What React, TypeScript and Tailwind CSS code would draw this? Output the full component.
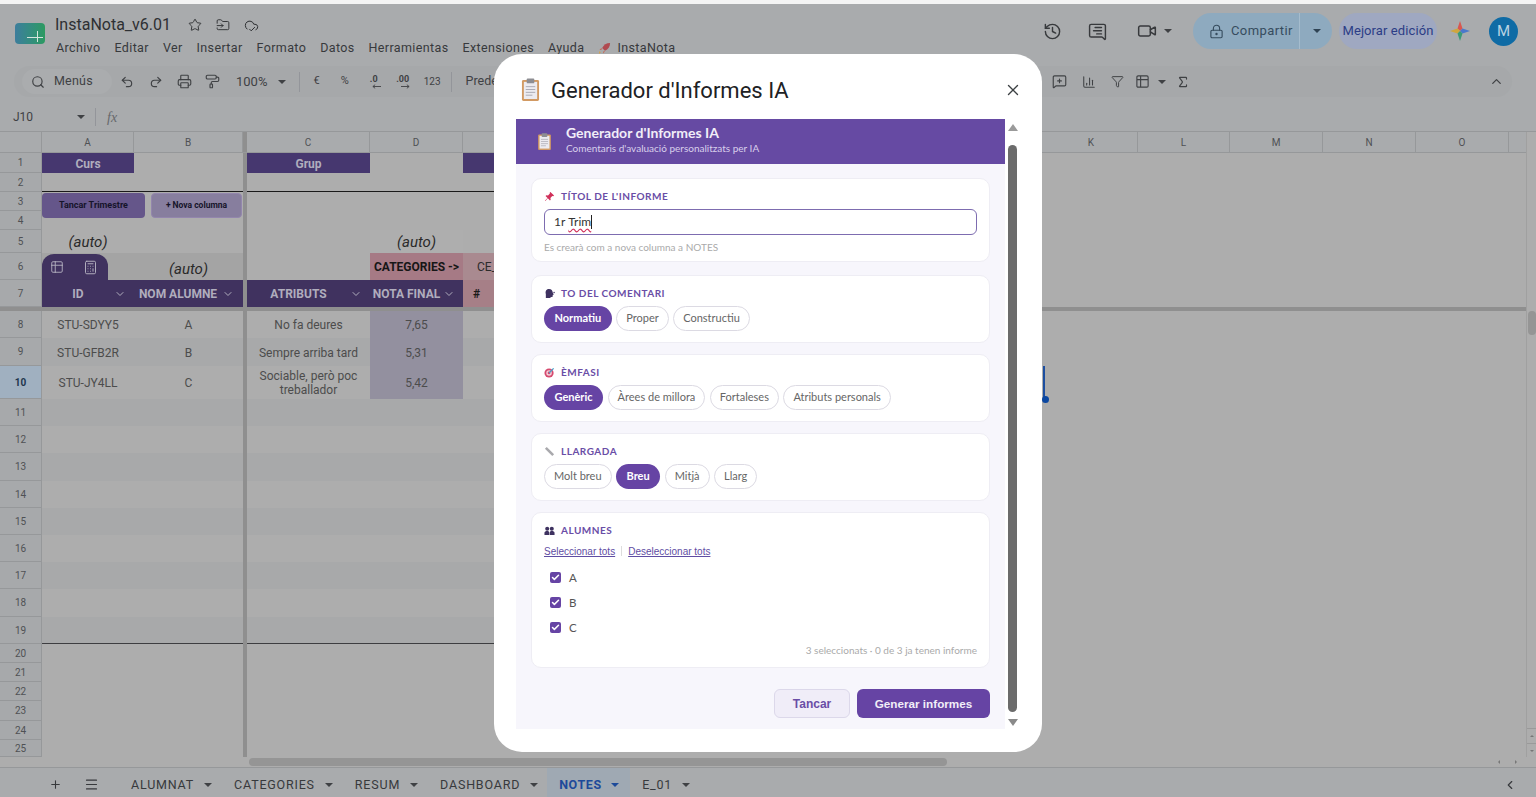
import React from 'react';
import {
  Search, Undo2, Redo2, Printer, PaintRoller, Star, FolderInput, CloudCheck, History, MessageSquareText,
  Video, LockKeyhole, MessageSquarePlus, ChartColumn, Filter, Sigma, ChevronUp, ChevronLeft, ChevronDown,
  X, Table2, Calculator, Plus, Menu, Check,
} from 'lucide-react';

const Caret = ({ className = 'text-[#3f4144]' }: { className?: string }) => (
  <svg viewBox="0 0 8 4" className={`h-[4px] w-[8px] fill-current ${className}`}>
    <path d="M0 0h8L4 4z" />
  </svg>
);

const Clipboard = ({ className }: { className: string }) => (
  <svg viewBox="0 0 20 24" className={className}>
    <rect x="1" y="2" width="18" height="22" rx="1.5" fill="#d29a63" />
    <rect x="3" y="4" width="14" height="18" fill="#ecebf0" />
    <rect x="6" y="0.5" width="8" height="5" rx="1" fill="#8d8d92" />
    <path d="M5 9h10M5 12h10M5 15h10M5 18h7" stroke="#a9a9b2" strokeWidth="1" />
  </svg>
);

const PinIcon = () => (
  <svg viewBox="0 0 12 12" className="h-[11px] w-[11px]">
    <path d="M7 1l4 4-1 .6-1-.2L7 7.600 7.300 9.500 6.500 10.300 4.200 8 1.500 10.800 1 10.500 3.800 7.600 1.700 5.500 2.500 4.700 4.400 5 6.400 2.800 6.300 1.700z" fill="#d0305a" />
  </svg>
);

const SpeakIcon = () => (
  <svg viewBox="0 0 12 12" className="h-[11px] w-[11px]">
    <path d="M2 11V6.500C1 3 3 1 5.500 1 8 1 9.500 2.500 9.500 5l1.200 2.200-1.200.4V9.500L7 10v1z" fill="#3e3260" />
    <circle cx="11" cy="5" r=".8" fill="#3e3260" />
  </svg>
);

const TargetIcon = () => (
  <svg viewBox="0 0 12 12" className="h-[11px] w-[11px]">
    <circle cx="5.500" cy="6.500" r="5" fill="#d64a6f" />
    <circle cx="5.500" cy="6.500" r="3" fill="#f3d5dd" />
    <circle cx="5.500" cy="6.500" r="1.500" fill="#d64a6f" />
    <path d="M5.500 6.500L10.500 1.500" stroke="#4a9cc7" strokeWidth="1.400" />
  </svg>
);

const RulerIcon = () => (
  <svg viewBox="0 0 12 12" className="h-[11px] w-[11px]">
    <path d="M1 3l2-2 8 8-2 2z" fill="#a9a9ad" />
  </svg>
);

const PeopleIcon = () => (
  <svg viewBox="0 0 12 12" className="h-[11px] w-[11px] fill-[#3e3260]">
    <circle cx="3.500" cy="4" r="2.200" />
    <circle cx="8.500" cy="4" r="2.200" />
    <path d="M.5 11V8.500C.5 7 2 6.500 3.500 6.500S5.700 7 5.700 8.500V11zM6.300 11V8.500C6.300 7 7 6.500 8.500 6.500S11.500 7 11.500 8.500V11z" />
  </svg>
);

const Gem = () => (
  <svg viewBox="0 0 20 20" className="h-[20px] w-[20px]">
    <path d="M10 0l2.500 7.500L10 10 7.500 7.500z" fill="#d9574f" />
    <path d="M0 10l7.500-2.500L10 10l-2.500 2.500z" fill="#cfa63e" />
    <path d="M20 10l-7.500-2.500L10 10l2.500 2.500z" fill="#4a78cc" />
    <path d="M10 20l2.500-7.500L10 10l-2.500 2.500z" fill="#3b9a78" />
  </svg>
);

const menus = ['Archivo', 'Editar', 'Ver', 'Insertar', 'Formato', 'Datos', 'Herramientas', 'Extensiones', 'Ayuda'];

const TopBar = () => (
  <div className="flex h-[58px] items-start bg-[#a9abad] pl-[15px]">
    <div className="mt-[19px] flex h-[21px] w-[30px] items-end justify-end rounded-[4px] bg-gradient-to-r from-[#3d7d9c] to-[#2c9a60] pb-[6px] pr-[2px]">
      <div className="relative h-px w-[16px] bg-[#d5e4dc]">
        <div className="absolute bottom-[-4px] left-[10px] h-[11px] w-px bg-[#d5e4dc]" />
      </div>
    </div>
    <div className="ml-[10px] flex flex-col pt-[10px]">
      <div className="flex h-[22px] items-center text-[#2e3033]">
        <span className="text-[16px]">InstaNota_v6.01</span>
        <Star className="ml-[17px] h-[14px] w-[14px]" strokeWidth={1.6} />
        <FolderInput className="ml-[14px] h-[14px] w-[14px]" strokeWidth={1.6} />
        <CloudCheck className="ml-[14px] h-[15px] w-[15px]" strokeWidth={1.6} />
      </div>
      <div className="mt-[3px] flex h-[18px] items-center gap-[14px] pl-[1px] text-[12.500px] tracking-[0.37px] text-[#37393c]">
        {menus.map((m) => (
          <span key={m}>{m}</span>
        ))}
        <span className="flex items-center gap-[6px]">
          <svg viewBox="0 0 14 14" className="h-[13px] w-[13px]">
            <path d="M13 1C9 1 6 3 4.500 6.500l3 3C11 8 13 5 13 1z" fill="#b04a50" />
            <path d="M4.500 6.500L1.500 8l2 .5zM7.500 9.500L6 12.500 5.500 10.500z" fill="#c9604a" />
            <path d="M3 11L1 13l.5-3z" fill="#d8a040" />
          </svg>
          InstaNota
        </span>
      </div>
    </div>
    <div className="ml-auto flex items-center pt-[9px] pr-[18px] text-[#37393c]">
      <History className="h-[19px] w-[19px]" strokeWidth={1.8} />
      <MessageSquareText className="ml-[26px] h-[19px] w-[19px] -scale-x-100" strokeWidth={1.8} />
      <Video className="ml-[30px] h-[20px] w-[20px]" strokeWidth={1.8} />
      <div className="ml-[7px]"><Caret /></div>
      <div className="ml-[21px] flex h-[36px] w-[139px] items-center rounded-full bg-[#8eaabf] text-[#364c5e]">
        <div className="flex h-full w-[107px] items-center border-r border-[#a5bccd] pl-[16px]">
          <LockKeyhole className="h-[15px] w-[15px]" strokeWidth={1.8} />
          <span className="ml-[7px] text-[13px] tracking-[0.4px]">Compartir</span>
        </div>
        <div className="pl-[13px]"><Caret className="text-[#2f4354]" /></div>
      </div>
      <div className="ml-[7px] flex h-[36px] w-[98px] items-center justify-center rounded-full bg-[#9fa8c1] text-[13px] tracking-[0.1px] text-[#2c3d86]">
        Mejorar edición
      </div>
      <div className="ml-[13px]"><Gem /></div>
      <div className="ml-[19px] flex h-[29px] w-[29px] items-center justify-center rounded-full bg-[#0f6ba5] text-[15px] text-[#b9d3e3]">
        M
      </div>
    </div>
  </div>
);

const DecIcon = ({ label, right }: { label: string; right?: boolean }) => (
  <div className="flex h-[20px] w-[20px] flex-col items-center justify-center font-bold leading-[9px] text-[#3f4144]">
    <span className="text-[9px]">{label}</span>
    <svg viewBox="0 0 10 5" className="ml-[6px] h-[5px] w-[9px] stroke-current" fill="none" strokeWidth="1">
      {right ? <path d="M0 2.500h9M6.500.5l2.500 2-2.500 2" /> : <path d="M10 2.500H1M3.500.5L1 2.500l2.500 2" />}
    </svg>
  </div>
);

const Toolbar = () => (
  <div className="flex h-[41px] items-center bg-[#a9abad] px-[14px] pb-[2px]">
    <div className="flex h-[31px] w-[1498px] items-center rounded-full bg-[#a6a8aa] pl-[8px] text-[#3f4144]">
      <div className="flex h-[25px] w-[90px] items-center rounded-full bg-[#aaacae] pl-[9px] text-[12.500px] tracking-[0.2px]">
        <Search className="h-[14px] w-[14px]" strokeWidth={2} />
        <span className="ml-[9px]">Menús</span>
      </div>
      <Undo2 className="ml-[8px] h-[14px] w-[14px]" strokeWidth={2} />
      <Redo2 className="ml-[15px] h-[14px] w-[14px]" strokeWidth={2} />
      <Printer className="ml-[14px] h-[15px] w-[15px]" strokeWidth={1.8} />
      <PaintRoller className="ml-[13px] h-[15px] w-[15px]" strokeWidth={1.8} />
      <span className="ml-[16px] text-[13px]">100%</span>
      <div className="ml-[11px]"><Caret /></div>
      <div className="ml-[13px] h-[20px] w-px bg-[#93959a]" />
      <span className="ml-[13px] text-[11px]">€</span>
      <span className="ml-[21px] text-[11px]">%</span>
      <div className="ml-[15px]"><DecIcon label=".0" /></div>
      <div className="ml-[9px]"><DecIcon label=".00" right /></div>
      <span className="ml-[11px] text-[10px]">123</span>
      <div className="ml-[10px] h-[20px] w-px bg-[#93959a]" />
      <span className="ml-[14px] text-[12.500px]">Predeterm...</span>
      <div className="ml-auto flex items-center pr-[8px]">
        <MessageSquarePlus className="h-[15px] w-[15px]" strokeWidth={1.8} />
        <ChartColumn className="ml-[15px] h-[14px] w-[14px]" strokeWidth={1.8} />
        <Filter className="ml-[15px] h-[13px] w-[13px]" strokeWidth={1.8} />
        <Table2 className="ml-[11px] h-[15px] w-[15px]" strokeWidth={1.8} />
        <div className="ml-[8px]"><Caret /></div>
        <Sigma className="ml-[10px] h-[14px] w-[14px]" strokeWidth={2} />
        <ChevronUp className="ml-[299px] h-[15px] w-[15px]" strokeWidth={2} />
      </div>
    </div>
  </div>
);

const FormulaBar = () => (
  <div className="flex h-[29px] items-center border-b border-[#96989a] bg-[#a9abad] text-[#3f4144]">
    <span className="ml-[13px] w-[64px] text-[12px]">J10</span>
    <Caret />
    <div className="ml-[10px] h-[18px] w-px bg-[#93959a]" />
    <span className="ml-[11px] font-['Liberation_Serif',serif] text-[14px] italic text-[#66686b]">fx</span>
  </div>
);

const ColHeader = ({ w, label, line = true }: { w: string; label: string; line?: boolean }) => (
  <div className={`${w} flex h-full shrink-0 items-center justify-center text-[10px] text-[#4f5154] ${line ? 'border-r border-[#96989a]' : ''}`}>
    {label}
  </div>
);

type RowProps = {
  n: number;
  h: string;
  band?: string;
  active?: boolean;
  a?: React.ReactNode;
  b?: React.ReactNode;
  c?: React.ReactNode;
  d?: React.ReactNode;
  e?: React.ReactNode;
  aCls?: string;
  bCls?: string;
  cCls?: string;
  dCls?: string;
  eCls?: string;
  under?: string;
  children?: React.ReactNode;
};

const SheetRow = ({ n, h, band = '', active, a, b, c, d, e, aCls = '', bCls = '', cCls = '', dCls = '', eCls = '', under = '', children }: RowProps) => (
  <div className={`relative flex ${h} shrink-0`}>
    <div className={`flex w-[42px] shrink-0 items-center justify-center border-b border-r border-[#96989a] text-[10px] ${active ? 'bg-[#a0b0c0] font-bold text-[#22364e]' : 'bg-[#a7a9ab] text-[#4f5154]'}`}>
      {n}
    </div>
    <div className={`flex w-[92px] shrink-0 items-center justify-center pt-[1px] ${band} ${under} ${aCls}`}>{a}</div>
    <div className={`flex w-[109px] shrink-0 items-center justify-center pt-[1px] ${band} ${under} ${bCls}`}>{b}</div>
    <div className="w-[4px] shrink-0 bg-[#8f8f8f]" />
    <div className={`flex w-[123px] shrink-0 items-center justify-center pt-[1px] text-center ${band} ${under} ${cCls}`}>{c}</div>
    <div className={`flex w-[93px] shrink-0 items-center justify-center pt-[1px] ${band} ${under} ${dCls}`}>{d}</div>
    <div className={`flex w-[579px] shrink-0 items-center pt-[1px] ${band} ${under} ${eCls}`}>{e}</div>
    {children}
  </div>
);

const bandA = 'bg-[#a8a9aa]';
const bandB = 'bg-[#adadad]';
const cellText = 'text-[12px] text-[#4c4c4c]';
const headText = 'text-[12px] font-bold text-[#b0adbd]';
const Auto = () => <span className="text-[15px] italic text-[#2a2a2a]">(auto)</span>;

const HeadCell = ({ label }: { label: string }) => (
  <div className={`flex w-full items-center ${headText}`}>
    <span className="flex-1 text-center">{label}</span>
    <ChevronDown className="h-[12px] w-[12px] shrink-0 text-[#b0adbd]" strokeWidth={2} />
  </div>
);

const emptyRows = [
  { n: 11, h: 'h-[27px]', band: bandA },
  { n: 12, h: 'h-[27px]', band: bandB },
  { n: 13, h: 'h-[28px]', band: bandA },
  { n: 14, h: 'h-[27px]', band: bandB },
  { n: 15, h: 'h-[27px]', band: bandA },
  { n: 16, h: 'h-[27px]', band: bandB },
  { n: 17, h: 'h-[27px]', band: bandA },
  { n: 18, h: 'h-[28px]', band: bandB },
];

const Grid = () => (
  <div className="flex min-h-0 flex-1 flex-col bg-[#adadad] font-['Roboto',sans-serif]">
    <div className="flex min-h-0 flex-1">
      <div className="flex min-w-0 flex-1 flex-col">
        <div className="flex h-[21px] shrink-0 border-b border-[#96989a] bg-[#a9abad]">
          <ColHeader w="w-[42px]" label="" />
          <ColHeader w="w-[92px]" label="A" />
          <ColHeader w="w-[109px]" label="B" />
          <div className="w-[4px] shrink-0 bg-[#8f8f8f]" />
          <ColHeader w="w-[123px]" label="C" />
          <ColHeader w="w-[93px]" label="D" />
          <div className="w-[582px] shrink-0" />
          <ColHeader w="w-[93px]" label="K" />
          <ColHeader w="w-[92px]" label="L" />
          <ColHeader w="w-[93px]" label="M" />
          <ColHeader w="w-[93px]" label="N" />
          <ColHeader w="w-[93px]" label="O" />
          <div className="flex-1" />
        </div>
        <SheetRow n={1} h="h-[20px]"
          a={<span className={headText}>Curs</span>} aCls="bg-[#46376f]"
          c={<span className={headText}>Grup</span>} cCls="bg-[#46376f]"
          eCls="bg-[#46376f]" />
        <SheetRow n={2} h="h-[19px]" under="border-b border-[#1a1a1a]" />
        <SheetRow n={3} h="h-[19px]">
          <div className="absolute left-[42px] top-[1px] flex h-[25px] w-[103px] items-center justify-center rounded-[4px] bg-[#65568a] text-[9px] font-bold text-[#16142a]">
            Tancar Trimestre
          </div>
          <div className="absolute left-[151px] top-[1px] flex h-[25px] w-[91px] items-center justify-center gap-[2px] rounded-[4px] border border-[#9386ad] bg-[#877e9e] text-[8.500px] font-bold text-[#16142a]">
            <span>+</span>
            <span>Nova columna</span>
          </div>
        </SheetRow>
        <SheetRow n={4} h="h-[19px]" />
        <SheetRow n={5} h="h-[23px]" a={<Auto />} d={<Auto />} dCls="bg-[#aeaeae]" />
        <SheetRow n={6} h="h-[27px]"
          aCls="items-end !justify-start bg-[#a4a4a4]" bCls="items-end bg-[#a4a4a4]"
          a={
            <div className="flex h-[26px] w-[66px] items-center rounded-t-[12px] bg-[#40325f] pl-[8px] text-[#b0adbd]">
              <Table2 className="h-[14px] w-[14px]" strokeWidth={1.6} />
              <Calculator className="ml-[19px] h-[15px] w-[15px]" strokeWidth={1.6} />
            </div>
          }
          b={<Auto />}
          d={<span className="text-[12px] font-bold text-[#161616]">CATEGORIES -&gt;</span>} dCls="bg-[#a67a85]"
          e={<span className="ml-[14px] text-[12px] text-[#2c2c2c]">CE_</span>} eCls="bg-[#a98a90]" />
        <SheetRow n={7} h="h-[27px]"
          aCls="bg-[#40325f] pr-[8px]" bCls="bg-[#40325f] pr-[9px]" cCls="bg-[#40325f] pr-[8px]" dCls="bg-[#40325f] pr-[8px]"
          a={<HeadCell label="ID" />}
          b={<HeadCell label="NOM ALUMNE" />}
          c={<HeadCell label="ATRIBUTS" />}
          d={<HeadCell label="NOTA FINAL" />}
          e={<span className="ml-[10px] text-[12px] font-bold text-[#1a1a1a]">#</span>} eCls="bg-[#a67f87]" />
        <div className="h-[4px] shrink-0 bg-[#8f8f8f]" />
        <SheetRow n={8} h="h-[27px]" band={bandB}
          a={<span className={cellText}>STU-SDYY5</span>} b={<span className={cellText}>A</span>}
          c={<span className={cellText}>No fa deures</span>} d={<span className={cellText}>7,65</span>} dCls="!bg-[#93909f]" />
        <SheetRow n={9} h="h-[28px]" band={bandA}
          a={<span className={cellText}>STU-GFB2R</span>} b={<span className={cellText}>B</span>}
          c={<span className={cellText}>Sempre arriba tard</span>} d={<span className={cellText}>5,31</span>} dCls="!bg-[#93909f]" />
        <SheetRow n={10} h="h-[33px]" active band={bandB}
          a={<span className={cellText}>STU-JY4LL</span>} b={<span className={cellText}>C</span>}
          c={<span className={`${cellText} leading-[14px]`}>Sociable, però poc treballador</span>} d={<span className={cellText}>5,42</span>} dCls="!bg-[#93909f]">
          <div className="absolute left-[1043px] top-0 h-[33px] w-[2px] bg-[#1c4ea0]" />
          <div className="absolute left-[1042px] top-[30px] h-[7px] w-[7px] rounded-full bg-[#0b47a1]" />
        </SheetRow>
        {emptyRows.map((r) => (
          <SheetRow key={r.n} n={r.n} h={r.h} band={r.band} />
        ))}
        <SheetRow n={19} h="h-[27px]" band={bandA} under="border-b border-[#3d3d40]" />
        <SheetRow n={20} h="h-[19px]" />
        <SheetRow n={21} h="h-[19px]" />
        <SheetRow n={22} h="h-[19px]" />
        <SheetRow n={23} h="h-[20px]" />
        <SheetRow n={24} h="h-[19px]" />
        <SheetRow n={25} h="h-[17px]" />
      </div>
      <div className="relative flex w-[10px] shrink-0 flex-col border-l border-[#a0a0a0]">
        <div className="mx-auto mt-[179px] h-[24px] w-[8px] rounded-full bg-[#959595]" />
        <div className="mt-auto flex h-[15px] items-center justify-center border-t border-[#9a9a9a]">
          <Caret className="rotate-180 scale-50 text-[#777]" />
        </div>
        <div className="flex h-[14px] items-center justify-center border-t border-[#9a9a9a]">
          <Caret className="scale-50 text-[#777]" />
        </div>
      </div>
    </div>
    <div className="flex h-[10px] shrink-0 items-center">
      <div className="w-[249px]" />
      <div className="h-[8px] w-[698px] rounded-full bg-[#959595]" />
      <div className="ml-auto mr-[16px] flex items-center gap-[9px] text-[#777]">
        <Caret className="rotate-90 scale-50" />
        <Caret className="-rotate-90 scale-50" />
      </div>
    </div>
  </div>
);

const tabs = ['ALUMNAT', 'CATEGORIES', 'RESUM', 'DASHBOARD'];

const TabBar = () => (
  <div className="flex h-[30px] shrink-0 items-center border-t border-[#96989a] bg-[#a9abad] font-['Roboto',sans-serif] text-[12.500px] tracking-[0.8px] text-[#37393c]">
    <Plus className="ml-[49px] mt-[4px] h-[13px] w-[13px]" strokeWidth={2} />
    <Menu className="ml-[22px] mt-[4px] h-[15px] w-[15px]" strokeWidth={1.8} />
    <div className="ml-[32px] flex h-full items-center">
      {tabs.map((t) => (
        <div key={t} className="mr-[22px] flex h-full items-center pt-[5px]">
          <span>{t}</span>
          <div className="ml-[10px]"><Caret /></div>
        </div>
      ))}
      <div className="-ml-[13px] flex h-full w-[83px] items-center bg-[#9fa9b3] pl-[12px] pt-[5px] font-bold tracking-[0.6px] text-[#1d4a9a]">
        <span>NOTES</span>
        <div className="ml-[9px]"><Caret className="text-[#1d4a9a]" /></div>
      </div>
      <div className="ml-[12px] flex h-full items-center pt-[5px]">
        <span>E_01</span>
        <div className="ml-[10px]"><Caret /></div>
      </div>
    </div>
    <ChevronLeft className="ml-auto mr-[19px] mt-[4px] h-[14px] w-[14px]" strokeWidth={2} />
  </div>
);

const Card = ({ icon, title, className = '', children }: { icon: React.ReactNode; title: string; className?: string; children: React.ReactNode }) => (
  <div className={`rounded-[10px] border border-[#eeedf4] bg-white px-[12px] ${className}`}>
    <div className="flex h-[13px] items-center">
      <span className="flex w-[17px] shrink-0">{icon}</span>
      <span className="text-[10px] font-bold tracking-[0.5px] text-[#6a4da6]">{title}</span>
    </div>
    {children}
  </div>
);

const Pills = ({ items, active }: { items: string[]; active: string }) => (
  <div className="mt-[6px] flex gap-[4.500px]">
    {items.map((p) =>
      p === active ? (
        <span key={p} className="flex h-[25px] items-center rounded-full bg-[#6644a4] px-[10.500px] text-[11px] font-bold text-white">{p}</span>
      ) : (
        <span key={p} className="flex h-[25px] items-center rounded-full border border-[#dcdae3] bg-white px-[9px] text-[11px] text-[#666]">{p}</span>
      ),
    )}
  </div>
);

const Student = ({ name }: { name: string }) => (
  <div className="flex h-[25px] items-center pl-[6px] text-[11.500px] text-[#555]">
    <span className="flex h-[11px] w-[11px] items-center justify-center rounded-[2px] bg-[#6644a4]">
      <Check className="h-[9px] w-[9px] text-white" strokeWidth={4} />
    </span>
    <span className="ml-[8px]">{name}</span>
  </div>
);

const Modal = () => (
  <div className="absolute left-[494px] top-[54px] flex h-[698px] w-[548px] flex-col rounded-[28px] bg-white pl-[22px]">
    <div className="flex h-[65px] shrink-0 items-center pt-[6px]">
      <Clipboard className="ml-[5px] h-[23px] w-[19px]" />
      <span className="ml-[11px] mt-[1px] font-['Roboto',sans-serif] text-[22px] text-[#202124]">Generador d'Informes IA</span>
      <X className="ml-auto mr-[20px] h-[18px] w-[18px] text-[#3c4043]" strokeWidth={1.8} />
    </div>
    <div className="flex h-[610px] w-[504px] font-['Lato',sans-serif]">
      <div className="flex w-[489px] shrink-0 flex-col bg-[#f7f6fc]">
        <div className="flex h-[45px] shrink-0 items-center bg-[#664aa3] pl-[21px] text-white">
          <Clipboard className="h-[17px] w-[15px]" />
          <div className="mb-[5px] ml-[14px] flex flex-col">
            <span className="text-[14px] font-bold leading-[17px] text-[#f1eef8]">Generador d'Informes IA</span>
            <span className="text-[10px] leading-[14px] text-[#d9d0ec]">Comentaris d'avaluació personalitzats per IA</span>
          </div>
        </div>
        <div className="flex flex-col px-[15px] pt-[14px]">
          <Card icon={<PinIcon />} title="TÍTOL DE L'INFORME" className="h-[84px] pt-[11px]">
            <div className="mt-[6px] flex h-[26px] items-center rounded-[6px] border border-[#7d6cb0] pl-[9px] text-[12px] text-[#333]">
              1r <span className="ml-[3px] underline decoration-[#d0305a] decoration-wavy underline-offset-2">Trim</span>
              <span className="h-[14px] w-px bg-[#222]" />
            </div>
            <div className="mt-[5px] text-[10px] text-[#aaa]">Es crearà com a nova columna a NOTES</div>
          </Card>
          <Card icon={<SpeakIcon />} title="TO DEL COMENTARI" className="mt-[13px] h-[68px] pt-[11px]">
            <Pills items={['Normatiu', 'Proper', 'Constructiu']} active="Normatiu" />
          </Card>
          <Card icon={<TargetIcon />} title="ÈMFASI" className="mt-[11px] h-[68px] pt-[11px]">
            <Pills items={['Genèric', 'Àrees de millora', 'Fortaleses', 'Atributs personals']} active="Genèric" />
          </Card>
          <Card icon={<RulerIcon />} title="LLARGADA" className="mt-[11px] h-[68px] pt-[11px]">
            <Pills items={['Molt breu', 'Breu', 'Mitjà', 'Llarg']} active="Breu" />
          </Card>
          <Card icon={<PeopleIcon />} title="ALUMNES" className="mt-[11px] h-[156px] pt-[11px]">
            <div className="mt-[8px] flex h-[12px] items-center font-['Liberation_Sans',sans-serif] text-[10px] text-[#5f4da3]">
              <span className="underline">Seleccionar tots</span>
              <span className="mx-[6px] h-[10px] w-px bg-[#ddd]" />
              <span className="underline">Deseleccionar tots</span>
            </div>
            <div className="mt-[8px] flex flex-col">
              <Student name="A" />
              <Student name="B" />
              <Student name="C" />
            </div>
            <div className="mt-[3px] text-right text-[10px] text-[#aaa]">3 seleccionats · 0 de 3 ja tenen informe</div>
          </Card>
          <div className="mt-[21px] flex justify-end gap-[7px]">
            <div className="flex h-[29px] w-[76px] items-center justify-center rounded-[6px] border border-[#dcd8ea] bg-[#f0edf8] font-['Liberation_Sans',sans-serif] text-[12px] font-bold text-[#6a4da6]">Tancar</div>
            <div className="flex h-[29px] w-[133px] items-center justify-center rounded-[6px] bg-[#6644a4] font-['Liberation_Sans',sans-serif] text-[11.700px] font-bold text-[#f1eef8]">Generar informes</div>
          </div>
        </div>
      </div>
      <div className="flex w-[15px] shrink-0 flex-col items-center">
        <svg viewBox="0 0 10 7" className="mt-[5px] h-[7px] w-[10px] fill-[#9a9a9a]"><path d="M5 0l5 7H0z" /></svg>
        <div className="mt-[14px] h-[567px] w-[9px] rounded-full bg-[#6b6b6b]" />
        <svg viewBox="0 0 10 7" className="mt-[7px] h-[7px] w-[10px] fill-[#8a8a8a]"><path d="M0 0h10L5 7z" /></svg>
      </div>
    </div>
  </div>
);

export default function App() {
  return (
    <div className="relative flex h-[797px] w-[1536px] flex-col overflow-hidden bg-white font-['Roboto',sans-serif]">
      <div className="h-[4px] shrink-0 bg-[#f4f4f4]" />
      <TopBar />
      <Toolbar />
      <FormulaBar />
      <Grid />
      <TabBar />
      <Modal />
    </div>
  );
}
